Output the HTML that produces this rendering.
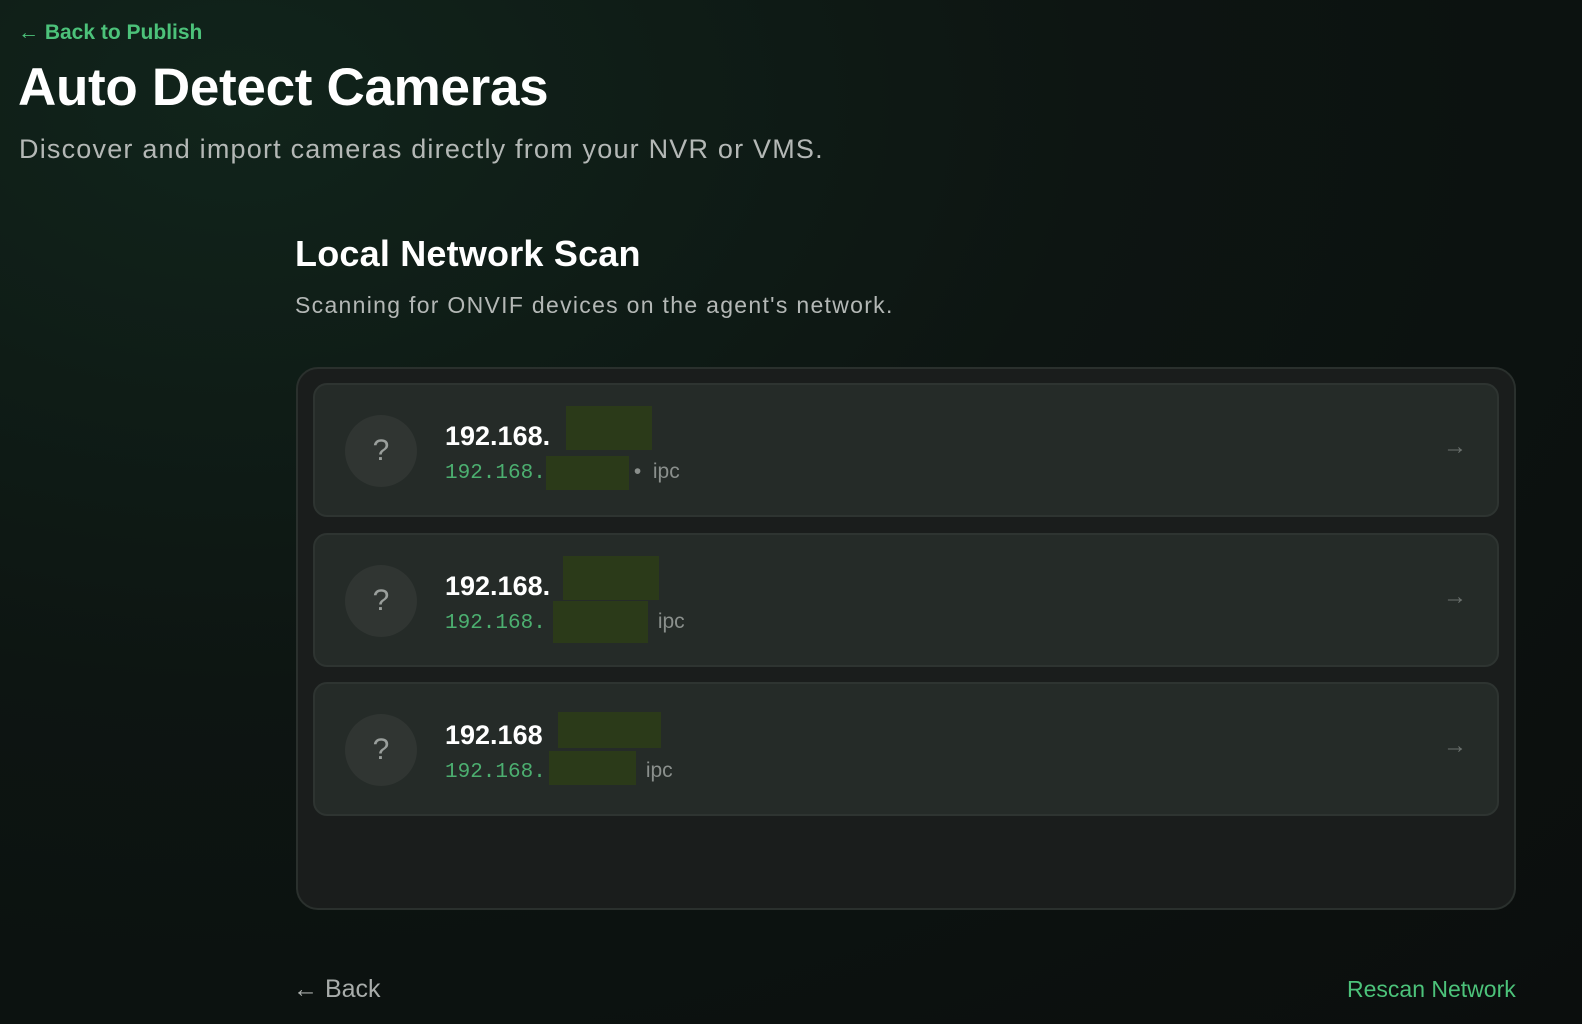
<!DOCTYPE html><html><head><style>
body{margin:0;width:1582px;height:1024px;overflow:hidden;background:radial-gradient(ellipse at 15% 10%,#11241b 0%,#0d1512 45%,#0b0e0d 100%);font-family:"Liberation Sans",sans-serif;color:#fff;position:relative}
.a{position:absolute}
.card{left:296px;top:367px;width:1220px;height:543px;background:#1a1d1c;border:2px solid #2a302d;border-radius:22px;box-sizing:border-box}
.row{left:313px;width:1186px;height:134px;background:#252b28;border:2px solid #2e3431;border-radius:14px;box-sizing:border-box}
.c{left:30px;top:30px;width:72px;height:72px;border-radius:50%;background:#303532;color:#9a9f9c;font-size:30px;text-align:center;line-height:72px}
.ip{left:130px;top:36px;font-size:27px;font-weight:bold}
.sub{left:130px;top:75px;font-size:21px;font-family:"Liberation Mono",monospace;color:#4caf70}
.ipc{font-size:21px;color:#8a8f8c;font-family:"Liberation Sans",sans-serif}
.m{position:absolute;background:#2b3a19}
.arr{right:30px;top:48px;font-size:24px;color:#6b716e}
</style></head><body>
<div class="a" style="left:18px;top:21px;font-size:21px;font-weight:bold;color:#4cc27a">← Back to Publish</div>
<div class="a" style="left:18px;top:57px;font-size:53px;font-weight:bold;letter-spacing:-0.3px">Auto Detect Cameras</div>
<div class="a" style="left:19px;top:134px;font-size:27px;color:#b4b8b6;letter-spacing:1.2px">Discover and import cameras directly from your NVR or VMS.</div>
<div class="a" style="left:295px;top:233px;font-size:36px;font-weight:bold;letter-spacing:0.2px">Local Network Scan</div>
<div class="a" style="left:295px;top:292px;font-size:23px;color:#b4b8b6;letter-spacing:1.3px">Scanning for ONVIF devices on the agent's network.</div>
<div class="a card"></div>
<div class="a row" style="top:383px"><div class="a c">?</div><div class="a ip">192.168.</div><div class="m" style="left:251px;top:21px;width:86px;height:44px"></div><div class="a sub">192.168.<span style="display:inline-block;width:88px"></span><span class="ipc">• &nbsp;ipc</span></div><div class="m" style="left:231px;top:71px;width:83px;height:34px"></div><div class="a arr">→</div></div>
<div class="a row" style="top:533px"><div class="a c">?</div><div class="a ip">192.168.</div><div class="m" style="left:248px;top:21px;width:96px;height:44px"></div><div class="a sub">192.168.<span style="display:inline-block;width:112px"></span><span class="ipc">ipc</span></div><div class="m" style="left:238px;top:66px;width:95px;height:42px"></div><div class="a arr">→</div></div>
<div class="a row" style="top:682px"><div class="a c">?</div><div class="a ip">192.168</div><div class="m" style="left:243px;top:28px;width:103px;height:36px"></div><div class="a sub">192.168.<span style="display:inline-block;width:100px"></span><span class="ipc">ipc</span></div><div class="m" style="left:234px;top:67px;width:87px;height:34px"></div><div class="a arr">→</div></div>
<div class="a" style="left:293px;top:975px;font-size:25px;color:#a8acaa">← Back</div>
<div class="a" style="left:1347px;top:976px;font-size:23px;color:#4cc27a">Rescan Network</div>
</body></html>
